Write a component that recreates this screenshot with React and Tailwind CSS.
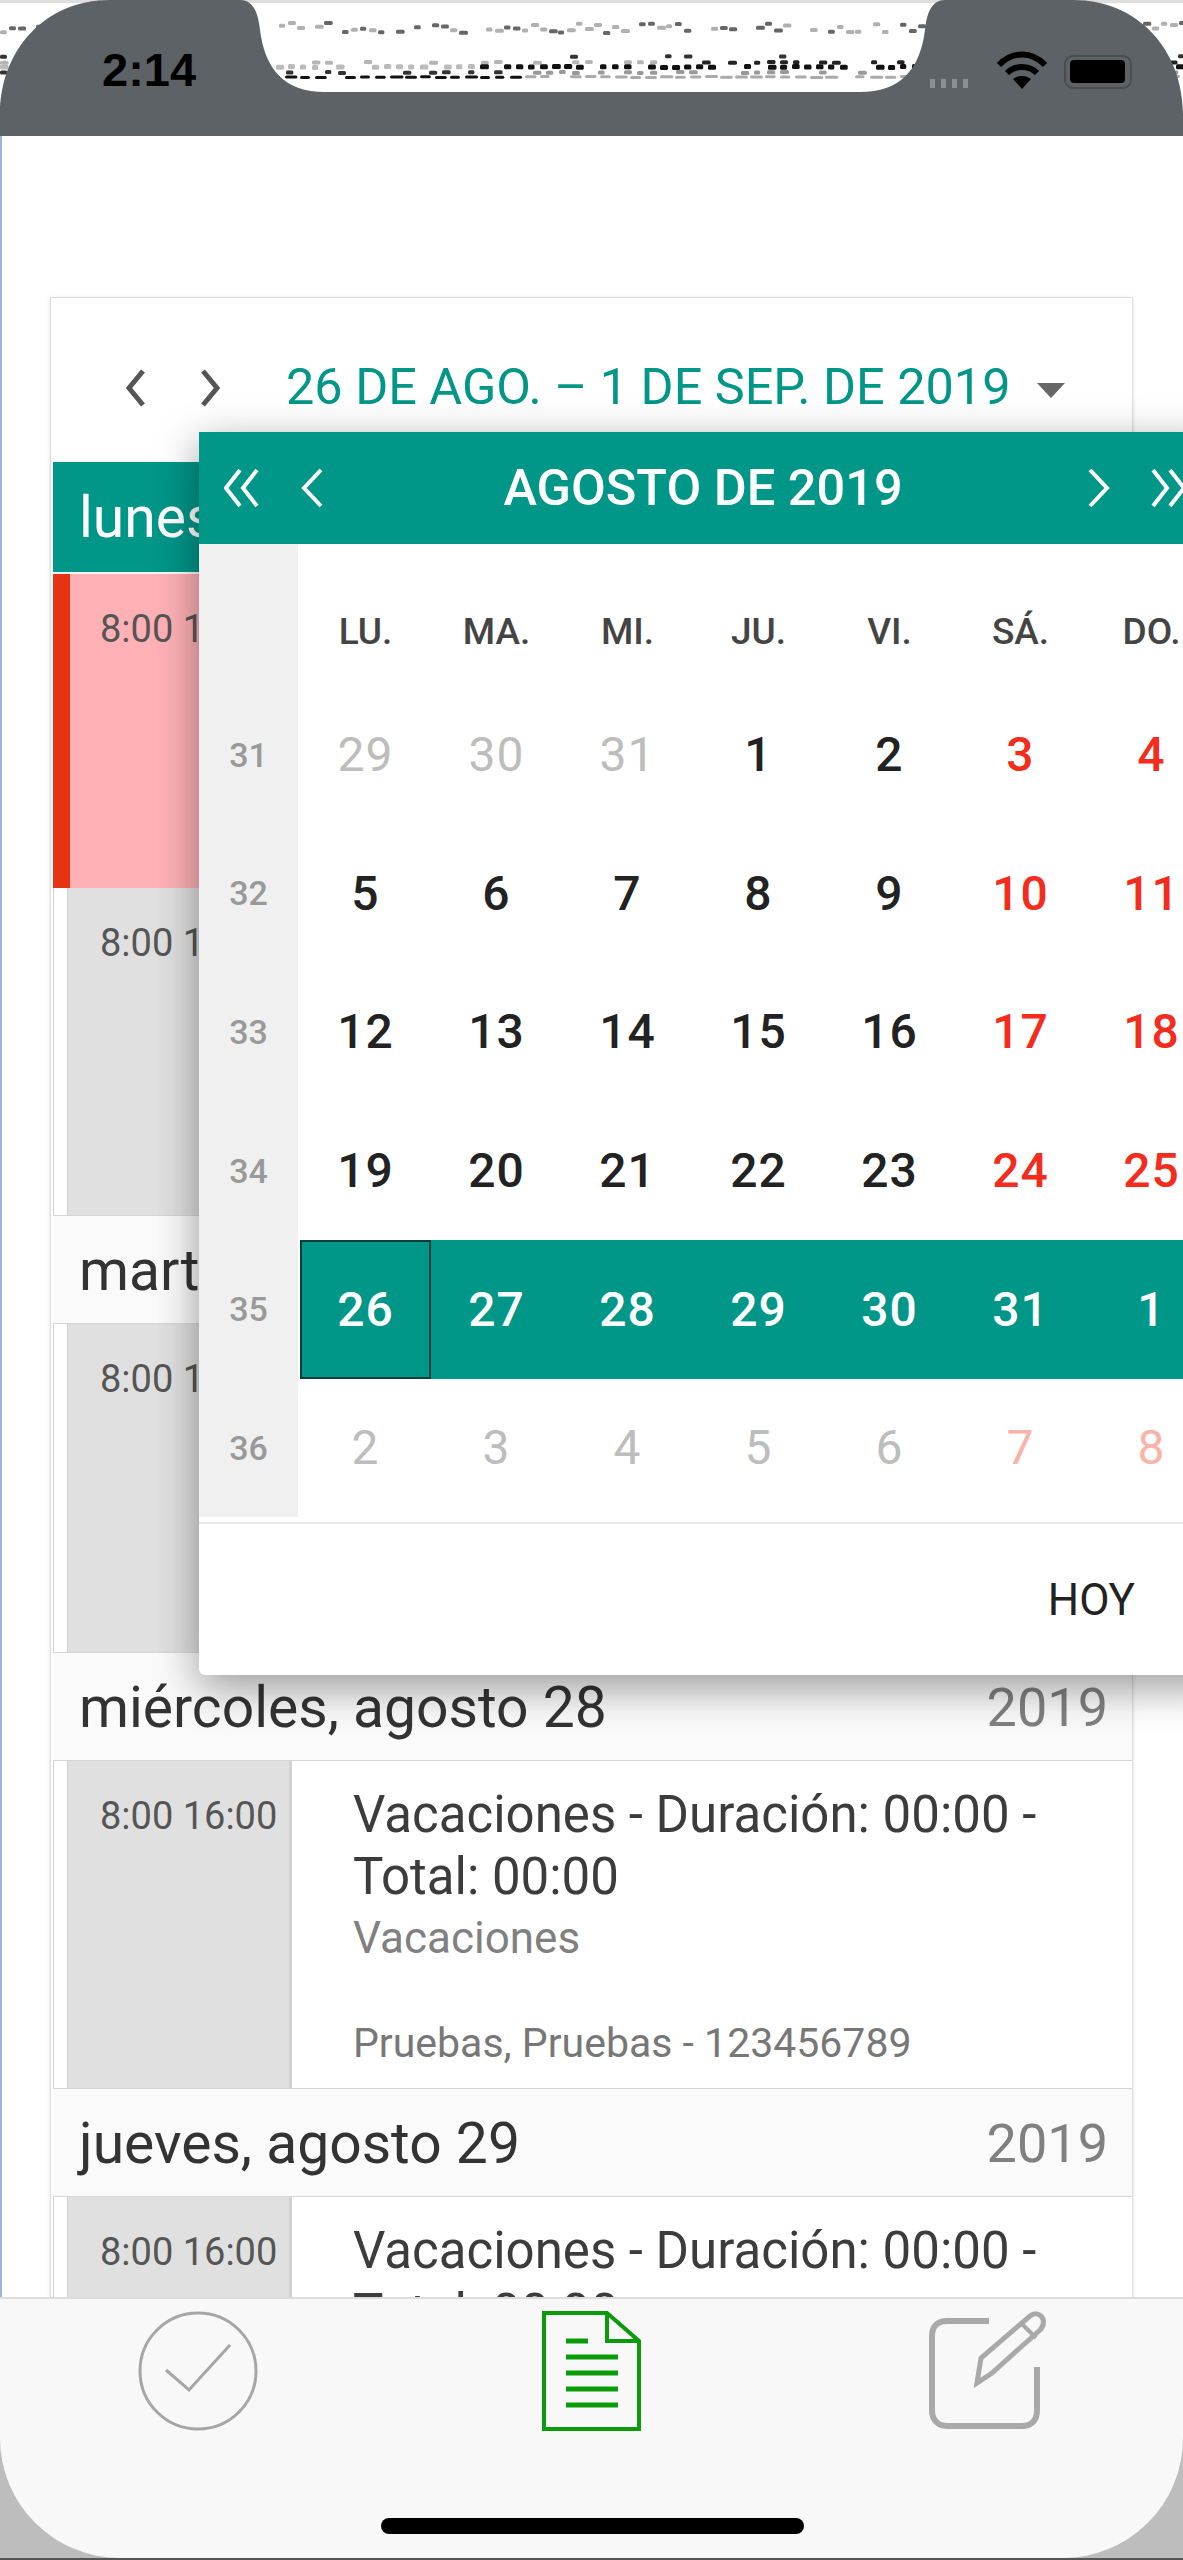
import React from "react";

const font = { fontFamily: "Roboto, sans-serif" };

const weeks = [
  { n: 31, days: ["29", "30", "31", "1", "2", "3", "4"], out: [0, 1, 2] },
  { n: 32, days: ["5", "6", "7", "8", "9", "10", "11"], out: [] },
  { n: 33, days: ["12", "13", "14", "15", "16", "17", "18"], out: [] },
  { n: 34, days: ["19", "20", "21", "22", "23", "24", "25"], out: [] },
  { n: 35, days: ["26", "27", "28", "29", "30", "31", "1"], out: [], selected: true },
  { n: 36, days: ["2", "3", "4", "5", "6", "7", "8"], out: [0, 1, 2, 3, 4, 5, 6], light: true },
];

const weekdays = ["LU.", "MA.", "MI.", "JU.", "VI.", "SÁ.", "DO."];

// the torn status bar background, a seeded scatter of specks
let seed = 7;
function rnd() {
  seed = (seed * 16807) % 2147483647;
  return seed / 2147483647;
}

function band(y, jitter, step, prob, w, h, colorAt) {
  const out = [];
  for (let x = 0; x < 1183; x += step) {
    if (rnd() > prob) continue;
    out.push({ x, y: y + rnd() * jitter, w: w + rnd() * w * 0.5, h, fill: colorAt(x) });
  }
  return out;
}

const specks = [
  ...band(21, 10, 9, 0.8, 6, 4, () => (rnd() > 0.6 ? "#666" : "#b0b0b0")),
  ...band(54, 1, 19, 0.22, 6, 4, () => "#333"),
  ...band(60, 1, 13, 0.5, 6, 4, (x) => (x > 650 ? "#222" : "#b5b5b5")),
  ...band(64, 1, 12, 0.8, 6, 5, (x) => (x > 470 ? "#111" : "#bbb")),
  ...band(70, 1, 13, 0.6, 6, 4, (x) => (x > 520 ? "#999" : "#333")),
  ...band(75, 1, 15, 0.85, 9, 3, (x) => (x > 520 ? "#aaa" : "#111")),
];

function StatusBar() {
  return (
    <div className="relative h-[136px] shrink-0">
      <svg className="absolute inset-0" width="1183" height="136" viewBox="0 0 1183 136">
        <rect x="0" y="0" width="1183" height="3" fill="#dedede" />
        <g className="blur-[0.7px]">
          {specks.map((s, i) => (
            <rect key={i} x={s.x} y={s.y} width={s.w} height={s.h} rx="1.5" fill={s.fill} />
          ))}
        </g>
        <path
          d="M0 136 V115 C0 50 45 0 110 0 H240 C253 0 258 12 260 30 C265 70 285 92 325 92 H860 C900 92 920 70 925 30 C927 12 932 0 945 0 H1073 C1138 0 1183 50 1183 115 V136 Z"
          fill="#5c6266"
        />
        <g fill="#8b9094">
          <rect x="930" y="79" width="5" height="9" />
          <rect x="941" y="79" width="5" height="9" />
          <rect x="952" y="79" width="5" height="9" />
          <rect x="963" y="79" width="5" height="9" />
        </g>
        <g fill="none" stroke="#000" strokeWidth="6">
          <path d="M999 65 C1012 51 1032 51 1045 65" />
          <path d="M1007 73 C1015 65 1029 65 1037 73" />
        </g>
        <path d="M1022 89 L1013 79 C1018 75 1026 75 1031 79 Z" fill="#000" />
        <rect x="1065" y="56" width="66" height="32" rx="8" fill="none" stroke="#4a4e52" strokeWidth="2" />
        <rect x="1070" y="60" width="55" height="23" rx="4" fill="#000" />
      </svg>
      <span className="absolute left-[102px] top-[35px] text-[47px] font-bold text-black" style={{ fontFamily: "'Liberation Sans', sans-serif" }}>
        2:14
      </span>
    </div>
  );
}

function DayHeader({ label, active, year }) {
  return (
    <div
      className={
        "shrink-0 flex items-center justify-between pl-[26px] pr-[24px] pt-[2px] border-y text-[57px] " +
        (active ? "h-[110px] bg-[#009688] border-[#009688] text-white" : "h-[109px] bg-[#fafafa] border-[#d6d6d6] text-[#333]")
      }
    >
      <span>{label}</span>
      {year && <span className="text-[54px] text-[#808080]">{year}</span>}
    </div>
  );
}

function ShiftRow({ height, pink, covered }) {
  return (
    <div className={"flex shrink-0 " + (pink ? "bg-[#ffb1b6] mt-[2px]" : "bg-white")} style={{ height }}>
      <div className={"shrink-0 " + (pink ? "w-[17px] bg-[#e63312]" : "w-[15px] border-x border-[#d0d0d0]")} />
      <div className={"shrink-0 pt-[33px] text-[38px] leading-[44px] whitespace-nowrap text-[#555] border-r-[3px] " + (pink ? "w-[222px] pl-[30px] border-transparent" : "w-[224px] pl-[32px] bg-[#e0e0e0] border-[#d2d2d2]")}>
        8:00 16:00
      </div>
      {!covered && (
        <div className="pl-[61px] pt-[23px] text-[#3c3c3c]">
          <p className="text-[51px] leading-[62px] w-[720px]">Vacaciones - Duración: 00:00 - Total: 00:00</p>
          <p className="text-[44px] leading-[60px] text-[#808080]">Vacaciones</p>
          <p className="mt-[53px] text-[41px] leading-[44px] text-[#777]">Pruebas, Pruebas - 123456789</p>
        </div>
      )}
    </div>
  );
}

function CalendarPopup() {
  return (
    <div className="absolute left-[199px] top-[432px] w-[1030px] h-[1243px] bg-white rounded-bl-[6px] shadow-[0_12px_44px_rgba(0,0,0,0.4)]">
      <div className="relative h-[112px] bg-[#009688] text-white flex items-center">
        <svg className="absolute left-[25px] top-[37px]" width="36" height="40" viewBox="0 0 36 40" fill="none" stroke="#fff" strokeWidth="4">
          <path d="M16 1 L2 19 L16 37" />
          <path d="M33 1 L19 19 L33 37" />
        </svg>
        <svg className="absolute left-[101px] top-[37px]" width="24" height="40" viewBox="0 0 24 40" fill="none" stroke="#fff" strokeWidth="4">
          <path d="M21 1 L4 19 L21 37" />
        </svg>
        <span className="absolute left-[254px] w-[500px] text-center text-[50.5px] font-medium whitespace-nowrap">AGOSTO DE 2019</span>
        <svg className="absolute left-[888px] top-[37px]" width="24" height="40" viewBox="0 0 24 40" fill="none" stroke="#fff" strokeWidth="4">
          <path d="M3 1 L20 19 L3 37" />
        </svg>
        <svg className="absolute left-[951px] top-[37px]" width="36" height="40" viewBox="0 0 36 40" fill="none" stroke="#fff" strokeWidth="4">
          <path d="M3 1 L17 19 L3 37" />
          <path d="M20 1 L34 19 L20 37" />
        </svg>
      </div>
      <div className="flex h-[973px]">
        <div className="w-[99px] shrink-0 bg-[#f0f0f0] pt-[142px] text-[#999] text-[34px] font-medium">
          {weeks.map((w) => (
            <div key={w.n} className="h-[138.6px] flex items-center justify-center">{w.n}</div>
          ))}
        </div>
        <div className="flex-1 ml-[2px]">
          <div className="h-[142px] flex items-end pb-[27px]">
            {weekdays.map((d) => (
              <div key={d} className="w-[131px] text-center text-[37px] font-medium text-[#444]">{d}</div>
            ))}
          </div>
          {weeks.map((w) => (
            <div key={w.n} className={"h-[138.6px] flex items-center " + (w.selected ? "bg-[#009688]" : "")}>
              {w.days.map((d, i) => {
                let color = i >= 5 ? "text-[#f32c1e]" : "text-[#222]";
                if (w.selected) color = "text-white";
                else if (w.light) color = i >= 5 ? "text-[#f9b3a9]" : "text-[#bdbdbd]";
                else if (w.out.includes(i)) color = "text-[#bdbdbd]";
                const isFirst = w.selected && i === 0;
                return (
                  <div
                    key={i}
                    className={
                      "w-[131px] h-full flex items-center justify-center text-[48px] tracking-[1px] " +
                      (w.light || w.out.includes(i) ? "font-normal " : "font-medium ") +
                      color +
                      (isFirst ? " border-2 border-[#0b3d38]" : "")
                    }
                  >
                    {d}
                  </div>
                );
              })}
            </div>
          ))}
        </div>
      </div>
      <div className="mt-[5px] border-t-2 border-[#e8e8e8] h-[153px] w-[984px] flex items-center justify-end pr-[48px] text-[44px] text-[#222]">
        HOY
      </div>
    </div>
  );
}

function TabBar() {
  return (
    <div className="absolute left-0 bottom-[2px] w-[1183px] h-[261px] bg-[#f8f8f8] border-t-2 border-[#dcdcdc] rounded-b-[120px]">
      <svg className="absolute left-0 top-0" width="1183" height="261" viewBox="0 2297 1183 261" fill="none">
        <ellipse cx="198" cy="2369" rx="58" ry="58" stroke="#a6a6a6" strokeWidth="3" />
        <path d="M166 2368 L189 2388 L230 2343" stroke="#a6a6a6" strokeWidth="3" />
        <path d="M544 2311 H607 L639 2339 V2427 H544 Z" stroke="#0a9a0a" strokeWidth="4" />
        <path d="M607 2311 V2339 H639" stroke="#0a9a0a" strokeWidth="4" />
        <g stroke="#0a9a0a" strokeWidth="5">
          <path d="M566 2339 H588" />
          <path d="M566 2355 H618" />
          <path d="M566 2371 H618" />
          <path d="M566 2387 H618" />
          <path d="M566 2403 H618" />
        </g>
        <path d="M989 2319 H947 C937 2319 932 2325 932 2334 V2408 C932 2418 938 2424 947 2424 H1022 C1032 2424 1037 2418 1037 2408 V2365" stroke="#a9a9a9" strokeWidth="6" />
        <path d="M977 2381 L981 2356 L1030 2314 C1035 2310 1041 2312 1043 2317 C1044 2321 1043 2325 1040 2328 L992 2371 Z" stroke="#a9a9a9" strokeWidth="5" />
        <path d="M1022 2322 L1036 2336" stroke="#a9a9a9" strokeWidth="4" />
      </svg>
      <div className="absolute left-[381px] top-[219px] w-[423px] h-[16px] rounded-full bg-black" />
    </div>
  );
}

export default function App() {
  return (
    <div className="relative w-[1183px] h-[2560px] overflow-hidden bg-white" style={font}>
      <StatusBar />
      <div className="absolute left-0 top-[136px] w-[2px] h-[2170px] bg-[#9db4dc]" />
      <div className="ml-[50px] mt-[161px] w-[1083px] border border-[#dddddd] shadow-[0_1px_4px_rgba(0,0,0,0.12)]">
        <div className="h-[164px] flex items-start pt-[59px]">
          <svg className="ml-[72px] mt-[11px]" width="26" height="40" viewBox="0 0 26 40" fill="none" stroke="#555" strokeWidth="5">
            <path d="M20 3 L6 20 L20 37" />
          </svg>
          <svg className="ml-[48px] mt-[11px]" width="26" height="40" viewBox="0 0 26 40" fill="none" stroke="#555" strokeWidth="5">
            <path d="M6 3 L20 20 L6 37" />
          </svg>
          <span className="ml-[63px] text-[50.4px] leading-[60px] text-[#009688] whitespace-nowrap">26 DE AGO. – 1 DE SEP. DE 2019</span>
          <div className="ml-[27px] mt-[26px] w-0 h-0 border-x-[14px] border-x-transparent border-t-[15px] border-t-[#666]" />
        </div>
        <div className="flex flex-col pl-[2px]">
          <DayHeader label="lunes, agosto 26" active />
          <ShiftRow height={314} pink covered />
          <ShiftRow height={327} covered />
          <DayHeader label="martes, agosto 27" />
          <ShiftRow height={328} covered />
          <DayHeader label="miércoles, agosto 28" year="2019" />
          <ShiftRow height={327} />
          <DayHeader label="jueves, agosto 29" year="2019" />
          <ShiftRow height={327} />
        </div>
      </div>
      <CalendarPopup />
      <div className="absolute left-0 bottom-0 w-[1183px] h-[130px] bg-[#bdbdbd]" />
      <TabBar />
      <div className="absolute left-0 bottom-0 w-[1183px] h-[2px] bg-[#555]" />
    </div>
  );
}
